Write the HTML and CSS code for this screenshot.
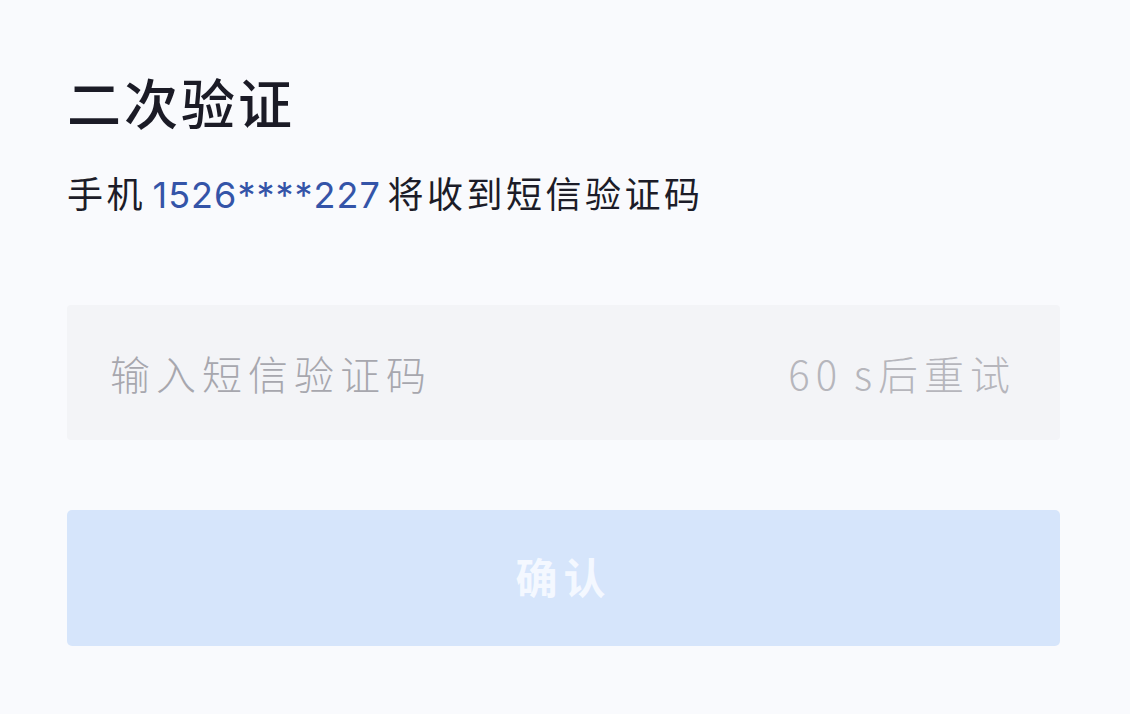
FILE: index.html
```html
<!DOCTYPE html>
<html lang="zh-CN">
<head>
<meta charset="utf-8">
<title>二次验证</title>
<link rel="stylesheet" href="styles.css">
</head>
<body>
<main class="page">
  <h1 class="title">二次验证</h1>
  <p class="subtitle">手机 <span class="phone">1526****227</span> 将收到短信验证码</p>
  <div class="code-field">
    <span class="placeholder">输入短信验证码</span>
    <span class="countdown">60 s后重试</span>
  </div>
  <button class="confirm" type="button">确认</button>
</main>
</body>
</html>
```

FILE: styles.css
```css
html, body {
  margin: 0;
  padding: 0;
  background: #f9fafd;
  height: 100%;
}

.page {
  box-sizing: border-box;
  width: 1130px;
  height: 714px;
  padding: 70px 70px 0 67px;
  display: flex;
  flex-direction: column;
  font-family: "Noto Sans CJK SC", "Noto Sans", sans-serif;
}

.title {
  margin: 0;
  font-size: 54px;
  line-height: 64px;
  font-weight: 500;
  color: #1b1b26;
  letter-spacing: 3px;
}

.subtitle {
  margin: 36px 0 0;
  font-size: 36px;
  line-height: 44px;
  color: #1c1c28;
  font-weight: 400;
  letter-spacing: 3.5px;
  word-spacing: -5px;
}

.phone {
  color: #3454a8;
  font-family: "Inter", "Noto Sans", sans-serif;
  font-weight: 400;
  letter-spacing: 1px;
}

.subtitle .rest {
  letter-spacing: 4px;
}

.code-field {
  margin-top: 88px;
  height: 135px;
  background: #f3f4f7;
  border-radius: 4px;
  display: flex;
  align-items: center;
  justify-content: space-between;
  padding: 0 50px 0 43px;
  box-sizing: border-box;
}

.placeholder {
  font-size: 40px;
  letter-spacing: 6px;
  color: #a7a7ae;
  font-weight: 300;
}

.countdown {
  font-size: 40px;
  letter-spacing: 6px;
  word-spacing: -4px;
  color: #b6b6bc;
  font-weight: 300;
  margin-right: -6px;
}

.confirm {
  margin-top: 70px;
  height: 136px;
  border: none;
  border-radius: 5px;
  background: #d6e5fb;
  color: #f4f8ff;
  font-family: "Noto Sans CJK SC", "Noto Sans", sans-serif;
  font-size: 42px;
  font-weight: 700;
  letter-spacing: 6px;
  padding: 0 0 6px;
}
```
